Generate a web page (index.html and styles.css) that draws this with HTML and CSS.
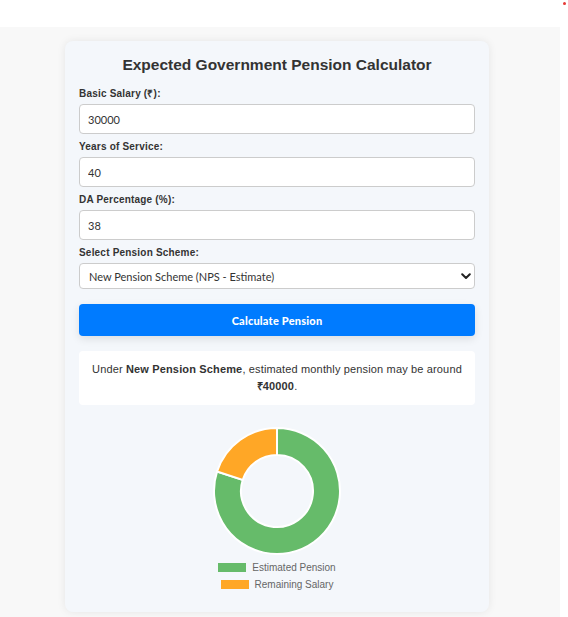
FILE: index.html
```html
<!DOCTYPE html>
<html lang="en">
<head>
    <meta charset="UTF-8">
    <meta name="viewport" content="width=device-width, initial-scale=1.0">
    <title>Expected Government Pension Calculator</title>
    <link rel="stylesheet" href="styles.css">
</head>
<body>

<div class="top-strip"></div>
<span class="status-dot"></span>

<div class="page">
    <div class="calculator">
        <h2 class="calc-title">Expected Government Pension Calculator</h2>

        <div class="field">
            <label class="field-label" for="salary">Basic Salary (₹):</label>
            <input type="text" class="field-input" id="salary" value="30000">
        </div>
        <div class="field">
            <label class="field-label" for="years">Years of Service:</label>
            <input type="text" class="field-input" id="years" value="40">
        </div>
        <div class="field">
            <label class="field-label" for="da">DA Percentage (%):</label>
            <input type="text" class="field-input" id="da" value="38">
        </div>
        <div class="field">
            <label class="field-label" for="scheme">Select Pension Scheme:</label>
            <div class="select-wrap">
                <select class="field-select" id="scheme">
                    <option>New Pension Scheme (NPS - Estimate)</option>
                    <option>Old Pension Scheme (OPS)</option>
                </select>
                <svg class="select-arrow" width="10" height="7" viewBox="0 0 10 7">
                    <path d="M1.2 1.2 L5 5 L8.8 1.2" fill="none" stroke="#222" stroke-width="2" stroke-linecap="round" stroke-linejoin="round"/>
                </svg>
            </div>
        </div>

        <button class="calc-button">Calculate Pension</button>

        <div class="result">
            Under <b>New Pension Scheme</b>, estimated monthly pension may be around <b>₹40000</b>.
        </div>

        <div class="chart">
            <svg class="donut" width="130" height="130" viewBox="0 0 130 130">
                <path d="M65 2 A63 63 0 1 1 5.08 45.53 L30.76 53.88 A36 36 0 1 0 65 29 Z" fill="#66bb6a" stroke="#fff" stroke-width="2"/>
                <path d="M5.08 45.53 A63 63 0 0 1 65 2 L65 29 A36 36 0 0 0 30.76 53.88 Z" fill="#ffa726" stroke="#fff" stroke-width="2"/>
            </svg>
            <div class="legend">
                <div class="legend-row"><span class="legend-box green"></span>Estimated Pension</div>
                <div class="legend-row"><span class="legend-box orange"></span>Remaining Salary</div>
            </div>
        </div>
    </div>
</div>

</body>
</html>
```

FILE: styles.css
```css
body {
    margin: 0;
    padding: 0;
    background-color: #fff;
    font-family: "Liberation Sans", Arial, sans-serif;
    color: #333;
}

.top-strip {
    height: 27px;
}

.status-dot {
    position: fixed;
    top: 2px;
    left: 563px;
    width: 3px;
    height: 3px;
    border-radius: 50%;
    background-color: #e53935;
}

.page {
    width: 560px;
    min-height: 590px;
    background-color: #f8f8f8;
    padding-top: 14px;
    box-sizing: border-box;
}

.calculator {
    margin-left: 65px;
    width: 424px;
    box-sizing: border-box;
    padding: 14px 14px 19px;
    background-color: #f4f7fb;
    border-radius: 8px;
    box-shadow: 0 0 8px rgba(0, 0, 0, 0.08);
}

.calc-title {
    margin: 0 0 13px;
    font-size: 15.5px;
    line-height: 20px;
    text-align: center;
    font-weight: bold;
    color: #333;
}

.field {
    margin-bottom: 7px;
}

.field-label {
    display: block;
    font-size: 10px;
    line-height: 12px;
    font-weight: bold;
    letter-spacing: 0.2px;
    color: #333;
    margin-bottom: 4px;
}

.field-input {
    display: block;
    width: 100%;
    height: 30px;
    box-sizing: border-box;
    padding: 0 8px;
    border: 1px solid #ccc;
    border-radius: 4px;
    background-color: #fff;
    font-family: Lato, "Open Sans", sans-serif;
    font-size: 11px;
    color: #333;
}

.select-wrap {
    position: relative;
}

.field-select {
    display: block;
    width: 100%;
    height: 26px;
    box-sizing: border-box;
    padding: 0 9px;
    border: 1px solid #ccc;
    border-radius: 4px;
    background-color: #fff;
    font-family: Lato, "Open Sans", sans-serif;
    font-size: 11px;
    color: #333;
    appearance: none;
    -webkit-appearance: none;
}

.select-arrow {
    position: absolute;
    right: 4px;
    top: 10px;
}

.calc-button {
    display: block;
    width: 100%;
    height: 32px;
    margin-top: 15px;
    border: none;
    border-radius: 4px;
    background-color: #007bff;
    color: #fff;
    font-family: Lato, "Open Sans", sans-serif;
    font-size: 11px;
    font-weight: 900;
    letter-spacing: 0.2px;
    cursor: pointer;
    box-shadow: 0 3px 8px rgba(0, 0, 0, 0.1);
}

.result {
    margin-top: 15px;
    padding: 10px 8px;
    background-color: #fff;
    border-radius: 4px;
    font-size: 11px;
    line-height: 17px;
    letter-spacing: 0.15px;
    text-align: center;
    color: #333;
}

.chart {
    margin-top: 21px;
    display: flex;
    flex-direction: column;
    align-items: center;
}

.donut {
    display: block;
}

.legend {
    margin-top: 3px;
    display: flex;
    flex-direction: column;
    align-items: center;
}

.legend-row {
    display: flex;
    align-items: center;
    font-size: 10px;
    line-height: 17px;
    color: #666;
}

.legend-box {
    width: 28px;
    height: 9px;
    margin-right: 6px;
}

.legend-box.green {
    background-color: #66bb6a;
}

.legend-box.orange {
    background-color: #ffa726;
}
```
